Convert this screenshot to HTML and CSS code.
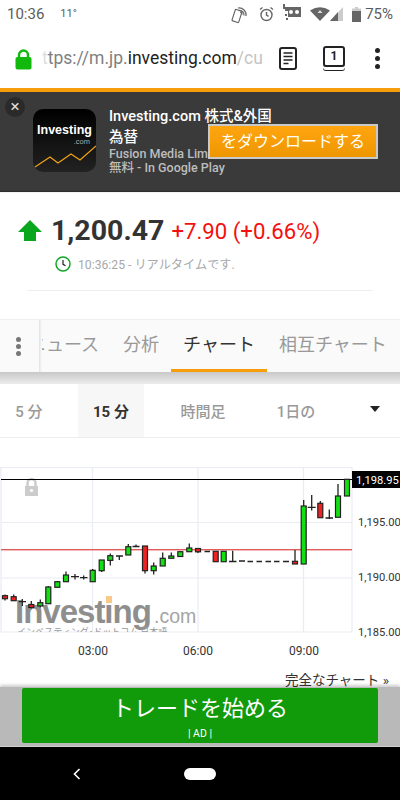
FILE: index.html
```html
<!DOCTYPE html>
<html lang="ja">
<head>
  <meta charset="UTF-8">
  <meta name="viewport" content="width=device-width, initial-scale=1.0">
  <title>Investing.com</title>
  <link rel="stylesheet" href="styles.css">
</head>
<body>
  <div class="phone">

    <!-- Status bar -->
    <div class="status-bar">
      <span class="clock">10:36</span>
      <span class="temp">11°</span>
      <div class="status-icons">
        <svg class="ic-nfc" width="18" height="20" viewBox="0 0 18 20" fill="none" stroke="#666" stroke-width="1.2">
          <rect x="2.5" y="6" width="7" height="12" rx="1" transform="rotate(18 6 12)"/>
          <path d="M7 4a7 7 0 0 1 8 8M8 6.500a4.500 4.500 0 0 1 5 5M9 8.500a2 2 0 0 1 2 2"/>
        </svg>
        <svg class="ic-alarm" width="15" height="16" viewBox="0 0 15 16" fill="none" stroke="#666" stroke-width="1.400">
          <circle cx="7.500" cy="9" r="5.500"/>
          <path d="M7.500 6v3.200l2 1.200M1 3.500L3.500 1.500M14 3.500L11.500 1.500"/>
        </svg>
        <svg class="ic-robot" width="18" height="16" viewBox="0 0 18 16">
          <path fill="#666" d="M0 0h2v3h16v10H5V7H2V5H0z"/>
          <circle cx="8" cy="8" r="2" fill="#fff"/>
          <circle cx="14" cy="8" r="2" fill="#fff"/>
          <path fill="#666" d="M2 10h2v2H2zM3 14h2v2H3z"/>
        </svg>
        <svg class="ic-wifi" width="20" height="14" viewBox="0 0 20 14">
          <path fill="#666" d="M0 3.500Q10-3 20 3.500L10 14z"/>
          <path fill="#ddd" d="M7.500 6L10 3l2.500 3z"/>
        </svg>
        <svg class="ic-signal" width="13" height="14" viewBox="0 0 13 14">
          <path fill="#ccc" d="M13 0v14H0z"/>
          <path fill="#666" d="M8 5v9H0z"/>
        </svg>
        <svg class="ic-battery" width="9" height="15" viewBox="0 0 9 15">
          <path fill="#ccc" d="M3 0h3v1.500h3V4H0V1.500h3z"/>
          <rect y="4" width="9" height="11" fill="#666"/>
        </svg>
        <span class="battery-level">75%</span>
      </div>
    </div>

    <!-- Browser toolbar -->
    <div class="toolbar">
      <svg class="lock" width="17" height="21" viewBox="0 0 17 21">
        <path fill="none" stroke="#10b90c" stroke-width="2.400" d="M4 9V6a4.500 4.500 0 0 1 9 0v3"/>
        <rect x="0.500" y="8" width="16" height="12.500" rx="2" fill="#10b90c"/>
      </svg>
      <div class="url"><span class="url-fade">t</span><span class="url-dim">tps://m.jp.</span><span class="url-host">investing.com</span><span class="url-path">/cu</span></div>
      <svg class="ic-reader" width="18" height="23" viewBox="0 0 18 23" fill="none" stroke="#222">
        <rect x="1" y="1" width="16" height="21" rx="2" stroke-width="2"/>
        <path stroke-width="1.400" d="M4.500 6h9M4.500 9.500h9M4.500 13h9M4.500 16.500h5"/>
      </svg>
      <div class="tab-count">1</div>
      <div class="kebab"><i></i><i></i><i></i></div>
    </div>

    <!-- App banner -->
    <div class="banner">
      <div class="banner-close">×</div>
      <svg class="app-icon" width="63" height="63" viewBox="0 0 63 63">
        <defs>
          <linearGradient id="iconbg" x1="0" y1="0" x2="0" y2="1">
            <stop offset="0" stop-color="#000"/>
            <stop offset="1" stop-color="#222"/>
          </linearGradient>
        </defs>
        <rect width="63" height="63" rx="10" fill="url(#iconbg)"/>
        <text x="31.500" y="25" text-anchor="middle" class="app-icon-name">Investing</text>
        <text x="57" y="35" text-anchor="end" class="app-icon-com">.com</text>
        <path fill="none" stroke="#f2a311" stroke-width="1.200" d="M2 58L17 48l8 6 13-9 9 6 16-14"/>
      </svg>
      <div class="banner-info">
        <div class="banner-title">Investing.com 株式&amp;外国<br>為替</div>
        <div class="banner-sub">Fusion Media Limited<br>無料 - In Google Play</div>
      </div>
      <div class="banner-btn">をダウンロードする</div>
    </div>

    <!-- Quote -->
    <div class="quote">
      <div class="quote-row">
        <svg class="arrow-up" width="24" height="21" viewBox="0 0 24 21"><path fill="#0aa71e" d="M12 0l12 12h-6v9H6v-9H0z"/></svg>
        <span class="last-price">1,200.47</span>
        <span class="change">+7.90 (+0.66%)</span>
      </div>
      <div class="quote-time">
        <svg width="16" height="16" viewBox="0 0 16 16" fill="none" stroke="#12a52a">
          <circle cx="8" cy="8" r="7" stroke-width="1.500"/>
          <path stroke="#222" stroke-width="1.200" d="M8 4v4.300l2.500 1.500"/>
        </svg>
        <span>10:36:25 - リアルタイムです.</span>
      </div>
      <div class="quote-rule"></div>
    </div>

    <!-- Section tabs -->
    <div class="tabs">
      <div class="tabs-more"><i></i><i></i><i></i></div>
      <div class="tab">ニュース</div>
      <div class="tab">分析</div>
      <div class="tab active">チャート</div>
      <div class="tab">相互チャート</div>
    </div>
    <div class="tabs-shadow"></div>

    <!-- Timeframes -->
    <div class="timeframes">
      <div class="tf tf-5">5 分</div>
      <div class="tf tf-15 active">15 分</div>
      <div class="tf tf-h">時間足</div>
      <div class="tf tf-d">1日の</div>
      <div class="tf-caret"></div>
    </div>

    <svg class="chart" width="400" height="227" viewBox="0 0 400 227">
      <defs>
        <clipPath id="plot"><rect x="0" y="0" width="352" height="172"/></clipPath>
      </defs>
      <g class="grid">
        <path d="M1 7.500H352V172H1zM1 62.500H352M1 118H352M92.500 7.500V172M198 7.500V172M303.500 7.500V172"/>
      </g>

      <g class="watermark" clip-path="url(#plot)">
        <text x="15" y="163" class="wm-main">Investing</text>
        <text x="154" y="163" class="wm-com">.com</text>
        <rect x="106" y="136" width="6" height="7" fill="#f8c987"/>
        <text x="17" y="175" class="wm-sub">インベスティング･ドットコム 日本語</text>
      </g>

      <rect class="lock-mark" x="25" y="26" width="13" height="10"/>
      <path class="lock-shackle" d="M27.500 26v-3a4 4 0 0 1 8 0v3"/>
      <circle cx="31.500" cy="30.500" r="1.600" fill="#fff"/>

      <path class="line-last" d="M1 19.500H352"/>
      <rect class="line-prev" x="1" y="89" width="351" height="1.400"/>

      <path class="wick" d="M5 134.500V140.500M13.700 134.500V140.500M22.300 139V146M18.700 141.700H26M31.300 141V148.500M40.300 139.500V147.500M48.300 126V143M57.300 121V127M66 111.500V121M75 114V119.500M71 116.700H79M83.700 115.500V119.500M80 117.700H87.500M92.700 109V121.500M101.700 100V112M110.300 93.500V105.500M119.300 96V100M116 96H123M128.300 84V95M136 84.500V86.500M132.500 86.500H139.500M145 86V113.500M153.700 102.500V114.500M162.700 92.500V106M171.300 92.500V98M180.300 91.500V96.500M189.300 83.500V91.500M198 88V93M204.500 91.500H210M232.700 90.700V101.500M229 101.500H236.500M239 101H245M247.500 101.500H253M256.500 101.500H262M265.500 101.500H271M274 101.500H279.500M283 101.500H289M295 90V101.500M303.700 40V46M311.700 35V50.500M307.700 47.300H315.700M320.300 41V44M329.300 49.500V59M325.500 58H333M338 24V36"/>

      <g class="body-up">
        <rect x="37.800" y="142.700" width="5" height="3.300"/>
        <rect x="45.800" y="127" width="5" height="16.700"/>
        <rect x="54.800" y="121.700" width="5" height="5.600"/>
        <rect x="63.500" y="115" width="5" height="6.700"/>
        <rect x="90.200" y="110.300" width="5" height="11.400"/>
        <rect x="99.200" y="100" width="5" height="10.700"/>
        <rect x="107.800" y="95.700" width="5" height="4.700"/>
        <rect x="125.800" y="86.700" width="5" height="8.300"/>
        <rect x="151.200" y="106" width="5" height="4.700"/>
        <rect x="160.200" y="98.300" width="5" height="7.700"/>
        <rect x="168.800" y="96" width="5" height="2.300"/>
        <rect x="177.800" y="91.700" width="5" height="4.800"/>
        <rect x="186.800" y="88" width="5" height="3.700"/>
        <rect x="221.200" y="91.300" width="5" height="10.400"/>
        <rect x="301.200" y="46" width="5" height="58"/>
        <rect x="335.500" y="36" width="5" height="21.300"/>
        <rect x="344.500" y="19.300" width="5" height="16.700"/>
      </g>
      <g class="body-down">
        <rect x="2.500" y="135.700" width="5" height="3"/>
        <rect x="11.200" y="136.700" width="5" height="4"/>
        <rect x="28.800" y="144.500" width="5" height="3"/>
        <rect x="142.500" y="86" width="5" height="24.700"/>
        <rect x="195.500" y="88.500" width="5" height="3.300"/>
        <rect x="213.200" y="91.300" width="5" height="10.400"/>
        <rect x="292.500" y="101.300" width="5" height="2.700"/>
        <rect x="317.800" y="43.300" width="5" height="14.400"/>
      </g>

      <rect x="352" y="11" width="48" height="17" fill="#000"/>
      <text x="356" y="24" class="label-last">1,198.95</text>
      <text x="358" y="66" class="label-price">1,195.00</text>
      <text x="358" y="121" class="label-price">1,190.00</text>
      <text x="358" y="176" class="label-price">1,185.00</text>
      <text x="93" y="195" text-anchor="middle" class="label">03:00</text>
      <text x="198" y="195" text-anchor="middle" class="label">06:00</text>
      <text x="304" y="195" text-anchor="middle" class="label">09:00</text>
      <text x="389" y="225" text-anchor="end" class="full-chart">完全なチャート »</text>
    </svg>

    <!-- Ad -->
    <div class="ad">
      <div class="ad-btn">
        <div class="ad-title">トレードを始める</div>
        <div class="ad-tag">| AD |</div>
      </div>
    </div>

    <!-- Android nav -->
    <div class="nav-bar">
      <svg class="nav-back" width="8" height="12" viewBox="0 0 8 12" fill="none" stroke="#fff" stroke-width="1.600"><path d="M6.500 1L1.500 6l5 5"/></svg>
      <div class="nav-home"></div>
    </div>

  </div>
</body>
</html>
```

FILE: styles.css
```css
/* General Styles */
body {
  margin: 0;
  padding: 0;
  background: #fff;
  font-family: Roboto, 'Noto Sans CJK JP', sans-serif;
}
.phone {
  width: 400px;
  height: 800px;
  overflow: hidden;
  display: flex;
  flex-direction: column;
}

/* Status bar */
.status-bar {
  height: 28px;
  flex: none;
  display: flex;
  align-items: center;
  padding: 0 7px 0 7px;
  color: #5c5c5c;
}
.clock {
  font-size: 15px;
}
.temp {
  font-size: 11px;
  margin-left: 16px;
  margin-bottom: 1px;
}
.status-icons {
  margin-left: auto;
  display: flex;
  align-items: center;
}
.ic-alarm { margin-left: 10px; }
.ic-robot { margin-left: 9px; margin-bottom: 4px; }
.ic-wifi { margin-left: 9px; }
.ic-signal { margin-left: 0; }
.ic-battery { margin-left: 9px; }
.battery-level {
  font-size: 15px;
  margin-left: 4px;
}

/* Toolbar */
.toolbar {
  height: 60px;
  flex: none;
  display: flex;
  align-items: center;
  padding: 0 0 0 15px;
  box-sizing: border-box;
}
.lock {
  flex: none;
  margin-top: 2px;
}
.url {
  width: 222px;
  margin-left: 10px;
  font-size: 17.5px;
  white-space: nowrap;
  overflow: hidden;
}
.url-fade { color: #ddd; }
.url-dim { color: #808080; }
.url-host { color: #222; }
.url-path { color: #c4c4c4; }
.ic-reader {
  flex: none;
  margin-left: 15px;
}
.tab-count {
  flex: none;
  width: 18px;
  height: 17px;
  margin-left: 26px;
  margin-bottom: 4px;
  border: 2px solid #222;
  border-radius: 3px;
  font-size: 12px;
  font-weight: 700;
  line-height: 17px;
  text-align: center;
  color: #222;
  box-shadow: 0 3px 0 0 #fff, 0 4px 0 0 #222;
}
.kebab {
  margin-left: 30px;
  display: flex;
  flex-direction: column;
  gap: 3px;
}
.kebab i {
  width: 5px;
  height: 5px;
  border-radius: 50%;
  background: #222;
}

/* Banner */
.banner {
  position: relative;
  flex: none;
  border-top: 4px solid #f79c0a;
  background: #3a3a3a;
  border-bottom: 1px solid #2c2c2c;
  display: flex;
  padding: 17px 0 0 33px;
  height: 82px;
}
.banner-close {
  position: absolute;
  left: 5px;
  top: 5px;
  width: 20px;
  height: 20px;
  border-radius: 50%;
  background: #2a2a2a;
  color: #ddd;
  font-size: 17px;
  line-height: 19px;
  text-align: center;
}
.app-icon {
  flex: none;
}
.app-icon-name {
  font-family: 'Liberation Sans', sans-serif;
  font-size: 12.500px;
  font-weight: 700;
  fill: #fff;
}
.app-icon-com {
  font-family: 'Liberation Sans', sans-serif;
  font-size: 7.500px;
  fill: #aaa;
}
.banner-info {
  margin-left: 13px;
  margin-top: -3px;
  width: 175px;
}
.banner-title {
  color: #fff;
  font-size: 14.500px;
  font-weight: 500;
  line-height: 21px;
  white-space: nowrap;
}
.banner-sub {
  color: #bdbdbd;
  font-size: 12.500px;
  font-weight: 500;
  line-height: 14px;
  margin-top: -1px;
  white-space: nowrap;
}
.banner-btn {
  position: absolute;
  left: 208px;
  top: 32px;
  width: 166px;
  height: 31px;
  border: 2px solid #c9c9c9;
  background: linear-gradient(#ffa50f, #ee9600);
  color: #fff;
  font-size: 16px;
  line-height: 31px;
  text-align: center;
  white-space: nowrap;
}

/* Quote */
.quote {
  height: 128px;
  flex: none;
  box-sizing: border-box;
  border-bottom: 1px solid #f0f0f0;
  border-top: 1px solid #f3f3f3;
  padding-top: 21px;
}
.quote-row {
  display: flex;
  align-items: center;
  height: 32px;
  padding-left: 18px;
}
.arrow-up { flex: none; }
.last-price {
  margin-left: 9px;
  font-size: 28.500px;
  font-weight: 700;
  color: #333;
}
.change {
  margin-left: 7px;
  font-size: 22.200px;
  color: #f50f0f;
  margin-top: 2px;
}
.quote-time {
  display: flex;
  align-items: center;
  margin-top: 9px;
  padding-left: 55px;
  font-size: 12.200px;
  color: #a8a8a8;
  height: 18px;
}
.quote-time span { margin-left: 7px; }
.quote-rule {
  height: 1px;
  margin: 17px 27px 0;
  background: #eee;
}

/* Tabs */
.tabs {
  position: relative;
  height: 52px;
  flex: none;
  box-sizing: border-box;
  display: flex;
  padding-left: 16px;
  background: #fafafa;
  overflow: hidden;
  white-space: nowrap;
}
.tabs-more {
  position: absolute;
  left: 0;
  top: 0;
  bottom: 0;
  width: 39px;
  padding-left: 16px;
  box-sizing: border-box;
  background: #fafafa;
  display: flex;
  flex-direction: column;
  justify-content: center;
  gap: 2px;
}
.tabs-more::after {
  content: "";
  position: absolute;
  left: 39px;
  top: 0;
  bottom: 0;
  width: 3px;
  background: linear-gradient(to right, #e2e2e2, #fafafa);
}
.tabs-more i {
  width: 5px;
  height: 5px;
  border-radius: 50%;
  background: #777;
}
.tab {
  flex: none;
  padding: 0 12px;
  font-size: 18px;
  line-height: 50px;
  color: #999;
}
.tab.active {
  color: #333;
  box-shadow: inset 0 -3px 0 #f79c0a;
}
.tabs-shadow {
  height: 12px;
  flex: none;
  background: linear-gradient(#c8c8c8, #ececec);
}

/* Timeframes */
.timeframes {
  height: 54px;
  flex: none;
  box-sizing: border-box;
  display: flex;
  align-items: stretch;
  border-bottom: 1px solid #eee;
  font-size: 15px;
  font-weight: 500;
  color: #999;
}
.tf {
  text-align: center;
  line-height: 56px;
}
.tf-5 { width: 58px; margin-right: 20px; }
.tf-15 { width: 66px; }
.tf-h { width: 118px; }
.tf-d { width: 68px; }
.tf.active {
  background: #f7f7f7;
  color: #333;
  font-weight: 700;
}
.tf-caret {
  width: 0;
  height: 0;
  margin: 22px 0 0 40px;
  border-left: 5.500px solid transparent;
  border-right: 5.500px solid transparent;
  border-top: 6px solid #222;
}

/* Chart */
.chart {
  flex: none;
  margin-top: 22px;
  display: block;
}
.grid path {
  fill: none;
  stroke: #e9ecf3;
  stroke-width: 1.200;
}
.wm-main {
  font-family: 'Liberation Sans', sans-serif;
  font-size: 33px;
  font-weight: 700;
  letter-spacing: -1px;
  fill: #8e8e8e;
}
.wm-com {
  font-family: 'Liberation Sans', sans-serif;
  font-size: 19.500px;
  fill: #a4a4a4;
}
.wm-sub {
  font-size: 9px;
  fill: #999;
}
.lock-mark { fill: #ccc; }
.lock-shackle {
  fill: none;
  stroke: #ccc;
  stroke-width: 2.500;
}
.line-last {
  stroke: #000;
  stroke-width: 1;
}
.line-prev {
  fill: #e25a5a;
}
.wick {
  fill: none;
  stroke: #222;
  stroke-width: 1.300;
}
.body-up rect,
.body-down rect {
  stroke: #222;
  stroke-width: 1.200;
}
.body-up rect { fill: #13e013; }
.body-down rect { fill: #ee2222; }
.label {
  font-size: 12px;
  fill: #333;
}
.label-price {
  font-size: 11.200px;
  fill: #333;
}
.label-last {
  font-size: 11.200px;
  fill: #fff;
}
.full-chart {
  font-size: 13.500px;
  fill: #333;
}

/* Ad */
.ad {
  height: 60px;
  flex: none;
  box-sizing: border-box;
  padding: 1px 22px 3px;
  background: #b9b9b9;
  border-bottom: 1px solid #cfcfcf;
  box-shadow: 0 -2px 3px rgba(0, 0, 0, 0.2);
  position: relative;
}
.ad-btn {
  height: 55px;
  background: #119a0a;
  border-radius: 2px;
  color: #fff;
  text-align: center;
}
.ad-title {
  font-size: 22px;
  font-weight: 400;
  line-height: 38px;
  padding-top: 2px;
}
.ad-tag {
  font-size: 10.500px;
  line-height: 11px;
}

/* Android nav */
.nav-bar {
  flex: 1;
  background: #000;
  position: relative;
  display: flex;
  align-items: center;
  padding-left: 73px;
}
.nav-home {
  width: 32px;
  height: 12px;
  margin-left: 103px;
  border-radius: 6px;
  background: #fff;
}
```
